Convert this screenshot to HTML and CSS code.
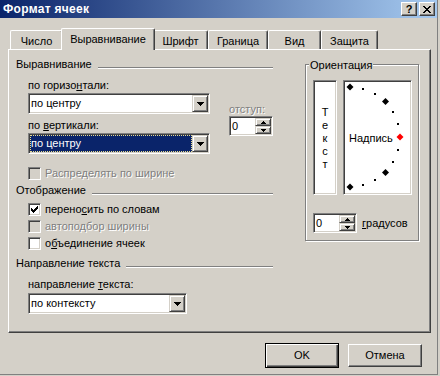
FILE: index.html
```html
<!DOCTYPE html>
<html lang="ru">
<head>
<meta charset="utf-8">
<title>Формат ячеек</title>
<link rel="stylesheet" href="styles.css">
</head>
<body>
<div class="window">
  <div class="titlebar">
    <span class="title">Формат ячеек</span>
    <div class="caption-btns">
      <span class="cap-btn">?</span>
      <span class="cap-btn"><svg class="glyph-x" width="8" height="7" viewBox="0 0 8 7"><path d="M0 0h2v1h-2z M6 0h2v1h-2z M1 1h2v1h-2z M5 1h2v1h-2z M2 2h4v1h-4z M3 3h2v1h-2z M2 4h4v1h-4z M1 5h2v1h-2z M5 5h2v1h-2z M0 6h2v1h-2z M6 6h2v1h-2z" fill="#000"/></svg></span>
    </div>
  </div>
  <div class="dialog">
    <div class="tabs">
      <div class="tab tab-number">Число</div>
      <div class="tab tab-align active">Выравнивание</div>
      <div class="tab tab-font">Шрифт</div>
      <div class="tab tab-border">Граница</div>
      <div class="tab tab-view">Вид</div>
      <div class="tab tab-protect">Защита</div>
    </div>
    <div class="panel">
      <div class="col-left">
        <div class="group-head head-align"><span>Выравнивание</span><i class="etch"></i></div>
        <div class="align-block">
          <div class="align-main">
            <div class="lbl">по горизо<u>н</u>тали:</div>
            <div class="combo combo-wide combo-first">
              <span class="combo-text">по центру</span>
              <span class="combo-btn"><svg width="7" height="4" viewBox="0 0 7 4"><path d="M0 0h7v1h-1v1h-1v1h-1v1h-1v-1h-1v-1h-1v-1h-1z" fill="#000"/></svg></span>
            </div>
            <div class="lbl lbl-vert">по <u>в</u>ертикали:</div>
            <div class="combo combo-wide combo-second">
              <span class="combo-text"><span class="sel">по центру</span></span>
              <span class="combo-btn"><svg width="7" height="4" viewBox="0 0 7 4"><path d="M0 0h7v1h-1v1h-1v1h-1v1h-1v-1h-1v-1h-1v-1h-1z" fill="#000"/></svg></span>
            </div>
          </div>
          <div class="indent-block">
            <div class="lbl disabled">отступ:</div>
            <div class="spin">
              <span class="spin-text">0</span>
              <span class="spin-btns">
                <span class="spin-btn"><svg width="5" height="3" viewBox="0 0 5 3"><path d="M2 0h1v1h1v1h1v1h-5v-1h1v-1h1z" fill="#000"/></svg></span>
                <span class="spin-btn"><svg width="5" height="3" viewBox="0 0 5 3"><path d="M0 0h5v1h-1v1h-1v1h-1v-1h-1v-1h-1z" fill="#000"/></svg></span>
              </span>
            </div>
          </div>
        </div>
        <div class="check check-distribute disabled"><span class="cb cb-off"></span><span>Распределять по ширине</span></div>
        <div class="group-head head-display"><span>Отображение</span><i class="etch"></i></div>
        <div class="check check-wrap"><span class="cb"><svg width="7" height="7" viewBox="0 0 7 7"><path d="M6 0h1v1h-1z M5 1h2v1h-2z M0 2h1v1h-1z M4 2h3v1h-3z M0 3h2v1h-2z M3 3h3v1h-3z M0 4h5v1h-5z M1 5h3v1h-3z M2 6h1v1h-1z" fill="#000"/></svg></span><span>перено<u>с</u>ить по словам</span></div>
        <div class="check check-row disabled"><span class="cb cb-off"></span><span>автоподбор ширины</span></div>
        <div class="check check-row"><span class="cb"></span><span>о<u>б</u>ъединение ячеек</span></div>
        <div class="group-head head-dir"><span>Направление текста</span><i class="etch"></i></div>
        <div class="lbl lbl-dir">направление <u>т</u>екста:</div>
        <div class="combo combo-narrow">
          <span class="combo-text">по контексту</span>
          <span class="combo-btn"><svg width="7" height="4" viewBox="0 0 7 4"><path d="M0 0h7v1h-1v1h-1v1h-1v1h-1v-1h-1v-1h-1v-1h-1z" fill="#000"/></svg></span>
        </div>
      </div>
      <div class="orient">
        <div class="orient-title">Ориентация</div>
        <div class="orient-boxes">
          <div class="sunken vtext"><span>Т</span><span>е</span><span>к</span><span>с</span><span>т</span></div>
          <div class="sunken dial">
            <svg class="dial-svg" width="65" height="111" viewBox="0 0 65 111">
              <g fill="#000">
                <polygon points="5,1.5 8.5,5 5,8.5 1.5,5"/>
                <rect x="17" y="6" width="2" height="2"/>
                <rect x="29" y="11" width="2" height="2"/>
                <polygon points="40.5,16 44,19.5 40.5,23 37,19.5"/>
                <rect x="47" y="29" width="2" height="2"/>
                <rect x="52" y="41" width="2" height="2"/>
                <rect x="52" y="67" width="2" height="2"/>
                <rect x="47" y="79" width="2" height="2"/>
                <polygon points="40.5,87 44,90.5 40.5,94 37,90.5"/>
                <rect x="29" y="97" width="2" height="2"/>
                <rect x="17" y="102" width="2" height="2"/>
                <polygon points="5,101.5 8.5,105 5,108.5 1.5,105"/>
              </g>
              <polygon points="55,51.5 58.5,55 55,58.5 51.5,55" fill="#ff0000"/>
            </svg>
            <span class="dial-label">Надпись</span>
          </div>
        </div>
        <div class="deg-row">
          <div class="spin">
            <span class="spin-text">0</span>
            <span class="spin-btns">
              <span class="spin-btn"><svg width="5" height="3" viewBox="0 0 5 3"><path d="M2 0h1v1h1v1h1v1h-5v-1h1v-1h1z" fill="#000"/></svg></span>
              <span class="spin-btn"><svg width="5" height="3" viewBox="0 0 5 3"><path d="M0 0h5v1h-1v1h-1v1h-1v-1h-1v-1h-1z" fill="#000"/></svg></span>
            </span>
          </div>
          <span class="lbl"><u>г</u>радусов</span>
        </div>
      </div>
    </div>
    <div class="actions">
      <div class="btn default">OK</div>
      <div class="btn">Отмена</div>
    </div>
  </div>
</div>
</body>
</html>
```
FILE: styles.css
```css
* { box-sizing: border-box; }
html, body { margin: 0; padding: 0; }
body {
  width: 440px; height: 376px; overflow: hidden;
  background: #d4d0c8;
  font-family: "Liberation Sans", Arial, sans-serif;
  font-size: 11px; line-height: 13px; color: #000;
}
u { text-decoration: underline; text-underline-offset: 1px; }
svg { display: block; }

.window {
  width: 438px; height: 375px;
  border-right: 1px solid #808080; border-bottom: 1px solid #808080;
  display: flex; flex-direction: column;
}

/* title bar */
.titlebar {
  height: 18px; flex: none;
  display: flex; align-items: center;
  padding: 0 2px 0 3px;
  background: linear-gradient(to right, #0a246a, #a6caf0);
}
.title { color: #fff; font-weight: bold; font-size: 12px; letter-spacing: 0.3px; }
.caption-btns { margin-left: auto; display: flex; gap: 2px; }
.cap-btn {
  width: 16px; height: 14px;
  display: flex; align-items: center; justify-content: center;
  background: #d4d0c8;
  border: 1px solid; border-color: #fff #404040 #404040 #fff;
  box-shadow: inset -1px -1px 0 #808080;
  font-weight: bold; font-size: 11px; line-height: 12px;
}

/* dialog body */
.dialog { flex: 1; display: flex; flex-direction: column; padding-left: 8px; }

.tabs {
  margin-top: 10px; height: 21px; flex: none;
  display: flex; align-items: flex-end; padding-left: 2px;
}
.tab {
  height: 19px; padding-top: 4px; text-align: center; white-space: nowrap;
  background: #d4d0c8;
  border: 1px solid; border-bottom: 0;
  border-color: #fff #404040 #404040 #fff;
  border-radius: 2px 2px 0 0;
  box-shadow: inset -1px 0 0 #808080;
}
.tab.active { height: 22px; margin: 0 -2px -1px; position: relative; z-index: 1; }
.tab-number { width: 53px; }
.tab-align { width: 94px; }
.tab-font { width: 55px; }
.tab-border { width: 60px; }
.tab-view { width: 53px; }
.tab-protect { width: 57px; }

.panel {
  flex: none; width: 423px; height: 284px;
  display: flex; align-items: flex-start;
  padding-left: 7px;
  border: 1px solid; border-color: #fff #404040 #404040 #fff;
  box-shadow: inset -1px -1px 0 #808080;
}

/* left column */
.col-left { width: 257px; display: flex; flex-direction: column; }
.group-head { display: flex; align-items: flex-start; white-space: nowrap; }
.etch {
  flex: 1; height: 2px; margin: 9px 0 0 6px;
  border-top: 1px solid #808080; border-bottom: 1px solid #fff;
}
.head-align { margin-top: 8px; }
.head-display { margin-top: 4px; }
.head-dir { margin-top: 7px; }

.lbl { white-space: nowrap; }
.disabled { color: #808080; text-shadow: 1px 1px 0 #fff; }

.align-block { display: flex; margin-top: 8px; margin-left: 12px; }
.align-main { display: flex; flex-direction: column; }
.combo-first { margin-top: 1px; }
.lbl-vert { margin-top: 5px; }
.combo-second { margin-top: 1px; }
.indent-block { margin: 24px 0 0 19px; display: flex; flex-direction: column; }

.combo {
  height: 21px; display: flex; padding: 1px;
  background: #fff;
  border: 1px solid; border-color: #808080 #fff #fff #808080;
  box-shadow: inset 1px 1px 0 #404040, inset -1px -1px 0 #d4d0c8;
}
.combo-wide { width: 182px; }
.combo-narrow { width: 159px; margin: 2px 0 0 12px; }
.combo-text { flex: 1; line-height: 17px; padding-left: 1px; display: flex; white-space: nowrap; }
.combo-second .combo-text { padding-left: 0; }
.sel {
  flex: 1; background: #0a246a; color: #fff; padding-left: 1px;
  outline: 1px dotted #e8dc8c; outline-offset: -1px;
}
.combo-btn {
  width: 16px; height: 17px;
  display: flex; align-items: center; justify-content: center;
  background: #d4d0c8;
  border: 1px solid; border-color: #d4d0c8 #404040 #404040 #d4d0c8;
  box-shadow: inset 1px 1px 0 #fff, inset -1px -1px 0 #808080;
}

.spin {
  width: 44px; height: 20px; display: flex; padding: 1px;
  background: #fff;
  border: 1px solid; border-color: #808080 #fff #fff #808080;
  box-shadow: inset 1px 1px 0 #404040, inset -1px -1px 0 #d4d0c8;
}
.spin-text { flex: 1; line-height: 16px; padding-left: 1px; color: #000; text-shadow: none; }
.spin-btns { width: 16px; display: flex; flex-direction: column; }
.spin-btn {
  flex: 1; display: flex; align-items: center; justify-content: center;
  background: #d4d0c8;
  border: 1px solid; border-color: #d4d0c8 #404040 #404040 #d4d0c8;
  box-shadow: inset 1px 1px 0 #fff, inset -1px -1px 0 #808080;
}

.check { display: flex; align-items: flex-start; gap: 4px; margin-left: 12px; white-space: nowrap; }
.check-distribute { margin-top: 13px; }
.check-wrap { margin-top: 6px; }
.check-row { margin-top: 4px; }
.cb {
  width: 13px; height: 13px; padding: 2px; flex: none;
  background: #fff;
  border: 1px solid; border-color: #808080 #fff #fff #808080;
  box-shadow: inset 1px 1px 0 #404040, inset -1px -1px 0 #d4d0c8;
}
.cb-off { background: #d4d0c8; }

.lbl-dir { margin: 8px 0 0 12px; }

/* orientation */
.orient {
  width: 114px; height: 177px;
  margin: 14px 0 0 32px;
  display: flex; flex-direction: column;
  padding-left: 7px;
  border: 1px solid #808080;
  box-shadow: 1px 1px 0 #fff, inset 1px 1px 0 #fff;
}
.orient-title {
  align-self: flex-start;
  margin: -6px 0 0 -4px; padding: 0 1px;
  background: #d4d0c8;
}
.orient-boxes { display: flex; gap: 6px; margin-top: 8px; }
.sunken {
  height: 115px; padding: 1px;
  background: #fff;
  border: 1px solid; border-color: #808080 #fff #fff #808080;
  box-shadow: inset 1px 1px 0 #404040, inset -1px -1px 0 #d4d0c8;
}
.vtext {
  width: 24px; display: flex; flex-direction: column;
  align-items: center; justify-content: center; padding-top: 3px;
}
.dial {
  width: 69px; position: relative;
  display: flex; align-items: center; padding-top: 3px;
}
.dial-svg { position: absolute; left: 1px; top: 1px; }
.dial-label { margin-left: 4px; }
.deg-row { display: flex; align-items: center; gap: 5px; margin-top: 18px; }

/* buttons */
.actions {
  margin-top: 10px;
  display: flex; justify-content: flex-end; align-items: center;
  gap: 9px; padding-right: 15px;
}
.btn {
  width: 74px; height: 23px;
  display: flex; align-items: center; justify-content: center;
  background: #d4d0c8;
  border: 1px solid; border-color: #fff #404040 #404040 #fff;
  box-shadow: inset -1px -1px 0 #808080;
}
.btn.default {
  height: 25px; border: 1px solid #000;
  box-shadow: inset 1px 1px 0 #fff, inset -1px -1px 0 #404040, inset -2px -2px 0 #808080;
}
```
